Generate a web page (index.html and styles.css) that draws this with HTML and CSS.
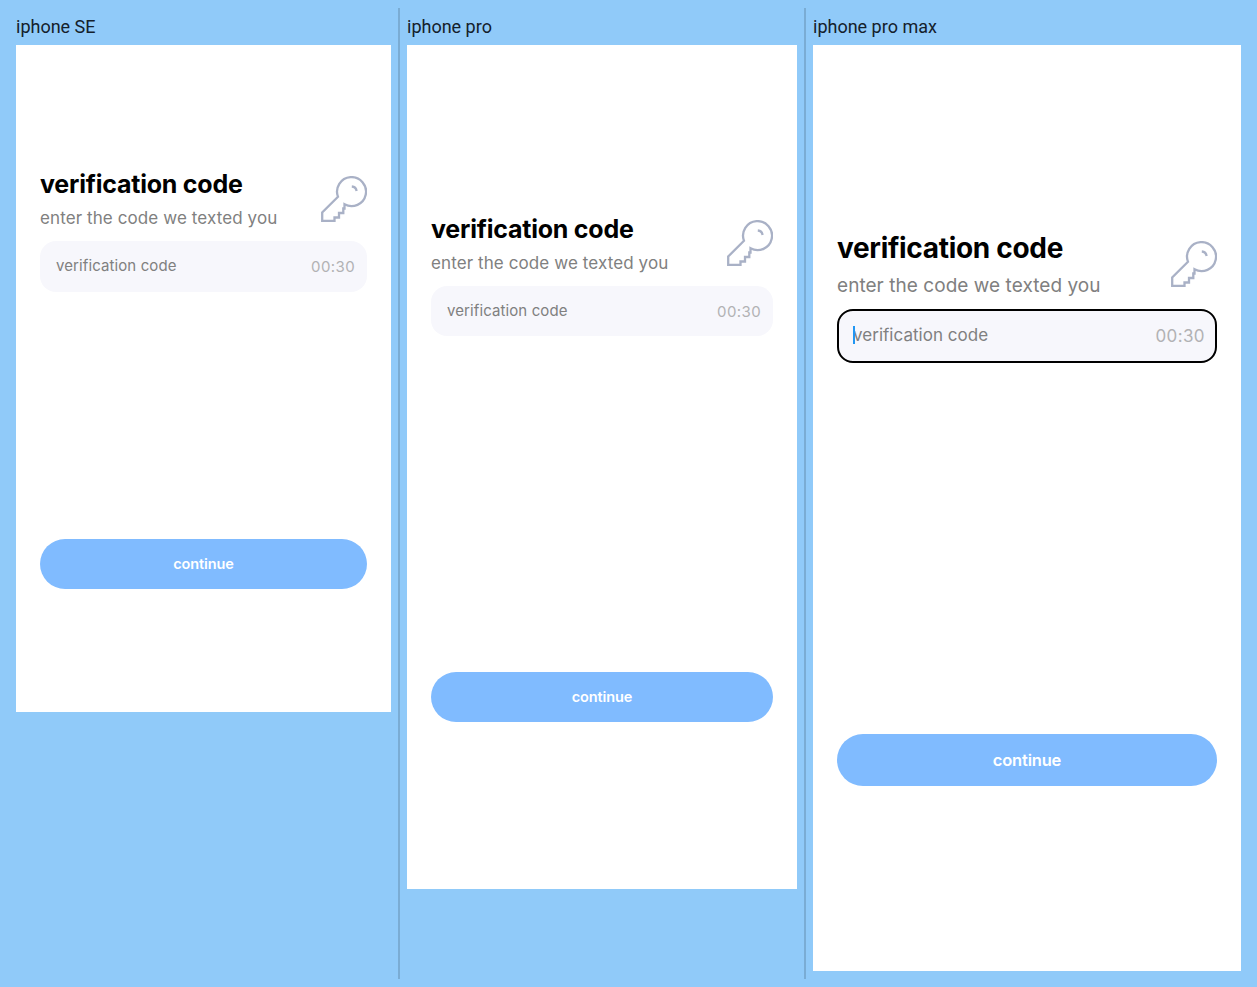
FILE: index.html
```html
<!DOCTYPE html>
<html lang="en">
<head>
<meta charset="utf-8">
<title>verification code</title>
<link rel="stylesheet" href="styles.css">
</head>
<body>
<svg class="defs" width="0" height="0" aria-hidden="true">
  <symbol id="key" viewBox="0 0 46 46">
    <path d="M17 20.800 1.200 36.500V44.800H13.500V41.500H18V37H22.300V32.500H23.500V28.300A14.500 14.500 0 1 0 17 20.800Z"/>
    <path d="M30.800 10.500c2.700.2 4.400 1.700 4.800 4.500"/>
  </symbol>
</svg>
<main class="board">
  <section class="column">
    <h2 class="label">iphone SE</h2>
    <div class="phone se">
      <header class="head"><div><h1 class="title">verification code</h1><p class="sub">enter the code we texted you</p></div><svg class="key"><use href="#key"/></svg></header>
      <div class="field"><span class="placeholder">verification code</span><span class="timer">00:30</span></div>
      <button class="continue">continue</button>
    </div>
  </section>
  <section class="column">
    <h2 class="label">iphone pro</h2>
    <div class="phone pro">
      <header class="head"><div><h1 class="title">verification code</h1><p class="sub">enter the code we texted you</p></div><svg class="key"><use href="#key"/></svg></header>
      <div class="field"><span class="placeholder">verification code</span><span class="timer">00:30</span></div>
      <button class="continue">continue</button>
    </div>
  </section>
  <section class="column">
    <h2 class="label">iphone pro max</h2>
    <div class="phone max">
      <header class="head"><div><h1 class="title">verification code</h1><p class="sub">enter the code we texted you</p></div><svg class="key"><use href="#key"/></svg></header>
      <div class="field focused"><i class="caret"></i><span class="placeholder">verification code</span><span class="timer">00:30</span></div>
      <button class="continue">continue</button>
    </div>
  </section>
</main>
</body>
</html>
```

FILE: styles.css
```css
* { box-sizing: border-box; }
body { margin: 0; padding: 8px; background: #90caf9; font-family: Inter, sans-serif; }
.defs { display: block; }
.board { display: flex; height: 971px; }
.column { padding: 8px 7px 0; border-right: 2px solid #7aacd4; }
.column:first-child { padding-left: 8px; }
.column:last-child { border-right: 0; }
.label { margin: 0; height: 29px; font: 400 18px/22px Roboto, sans-serif; color: #14202b; }
.phone { display: flex; flex-direction: column; padding: 0 24px; background: #fff; }
.se { width: 375px; height: 667px; padding-top: 124px; }
.pro { width: 390px; height: 844px; padding-top: 169px; }
.max { width: 428px; height: 926px; padding-top: 187px; }
.head { display: flex; justify-content: space-between; height: 72px; }
.title { margin: 0; font-size: 25px; font-weight: 700; line-height: 30px; letter-spacing: -.22px; color: #000; white-space: nowrap; }
.sub { margin: 6px 0 0; font-size: 17px; line-height: 26px; letter-spacing: .1px; color: #808080; white-space: nowrap; }
.key { width: 46px; height: 46px; margin-top: 7px; fill: none; stroke: #a9b1c6; stroke-width: 2.3; }
.pro .key { margin-top: 6px; }
.field { position: relative; display: flex; justify-content: space-between; align-items: center; height: 51px; padding: 0 12px 0 16px; border-radius: 16px; background: #f7f7fc; }
.placeholder { padding-bottom: 2px; font-size: 15px; line-height: 20px; letter-spacing: .1px; color: #808080; }
.timer { font-size: 15px; line-height: 20px; letter-spacing: .4px; color: #b2b2b4; }
.continue { height: 50px; margin-top: 246.500px; padding: 0; border: 0; border-radius: 26px; background: #80bbff; color: #fff; font: 600 14.500px/20px Inter, sans-serif; letter-spacing: -.12px; }
.pro .field { height: 50px; padding-top: 2px; }
.pro .continue { margin-top: 335.500px; }
.max .head { height: 77px; }
.max .title { font-size: 28px; line-height: 33px; letter-spacing: -.3px; }
.max .sub { margin-top: 7px; font-size: 19px; line-height: 28px; letter-spacing: .05px; }
.max .key { margin-top: 9px; }
.max .field { height: 54px; }
.max .placeholder { font-size: 17px; letter-spacing: .03px; }
.max .timer { font-size: 17px; }
.max .continue { height: 52px; margin-top: 371px; font-size: 16.500px; letter-spacing: -.2px; }
.max .focused { padding: 0 10px 0 14px; border: 2px solid #000; }
.caret { position: absolute; left: 14px; top: 15px; width: 2px; height: 18px; background: #2196f3; }
```
